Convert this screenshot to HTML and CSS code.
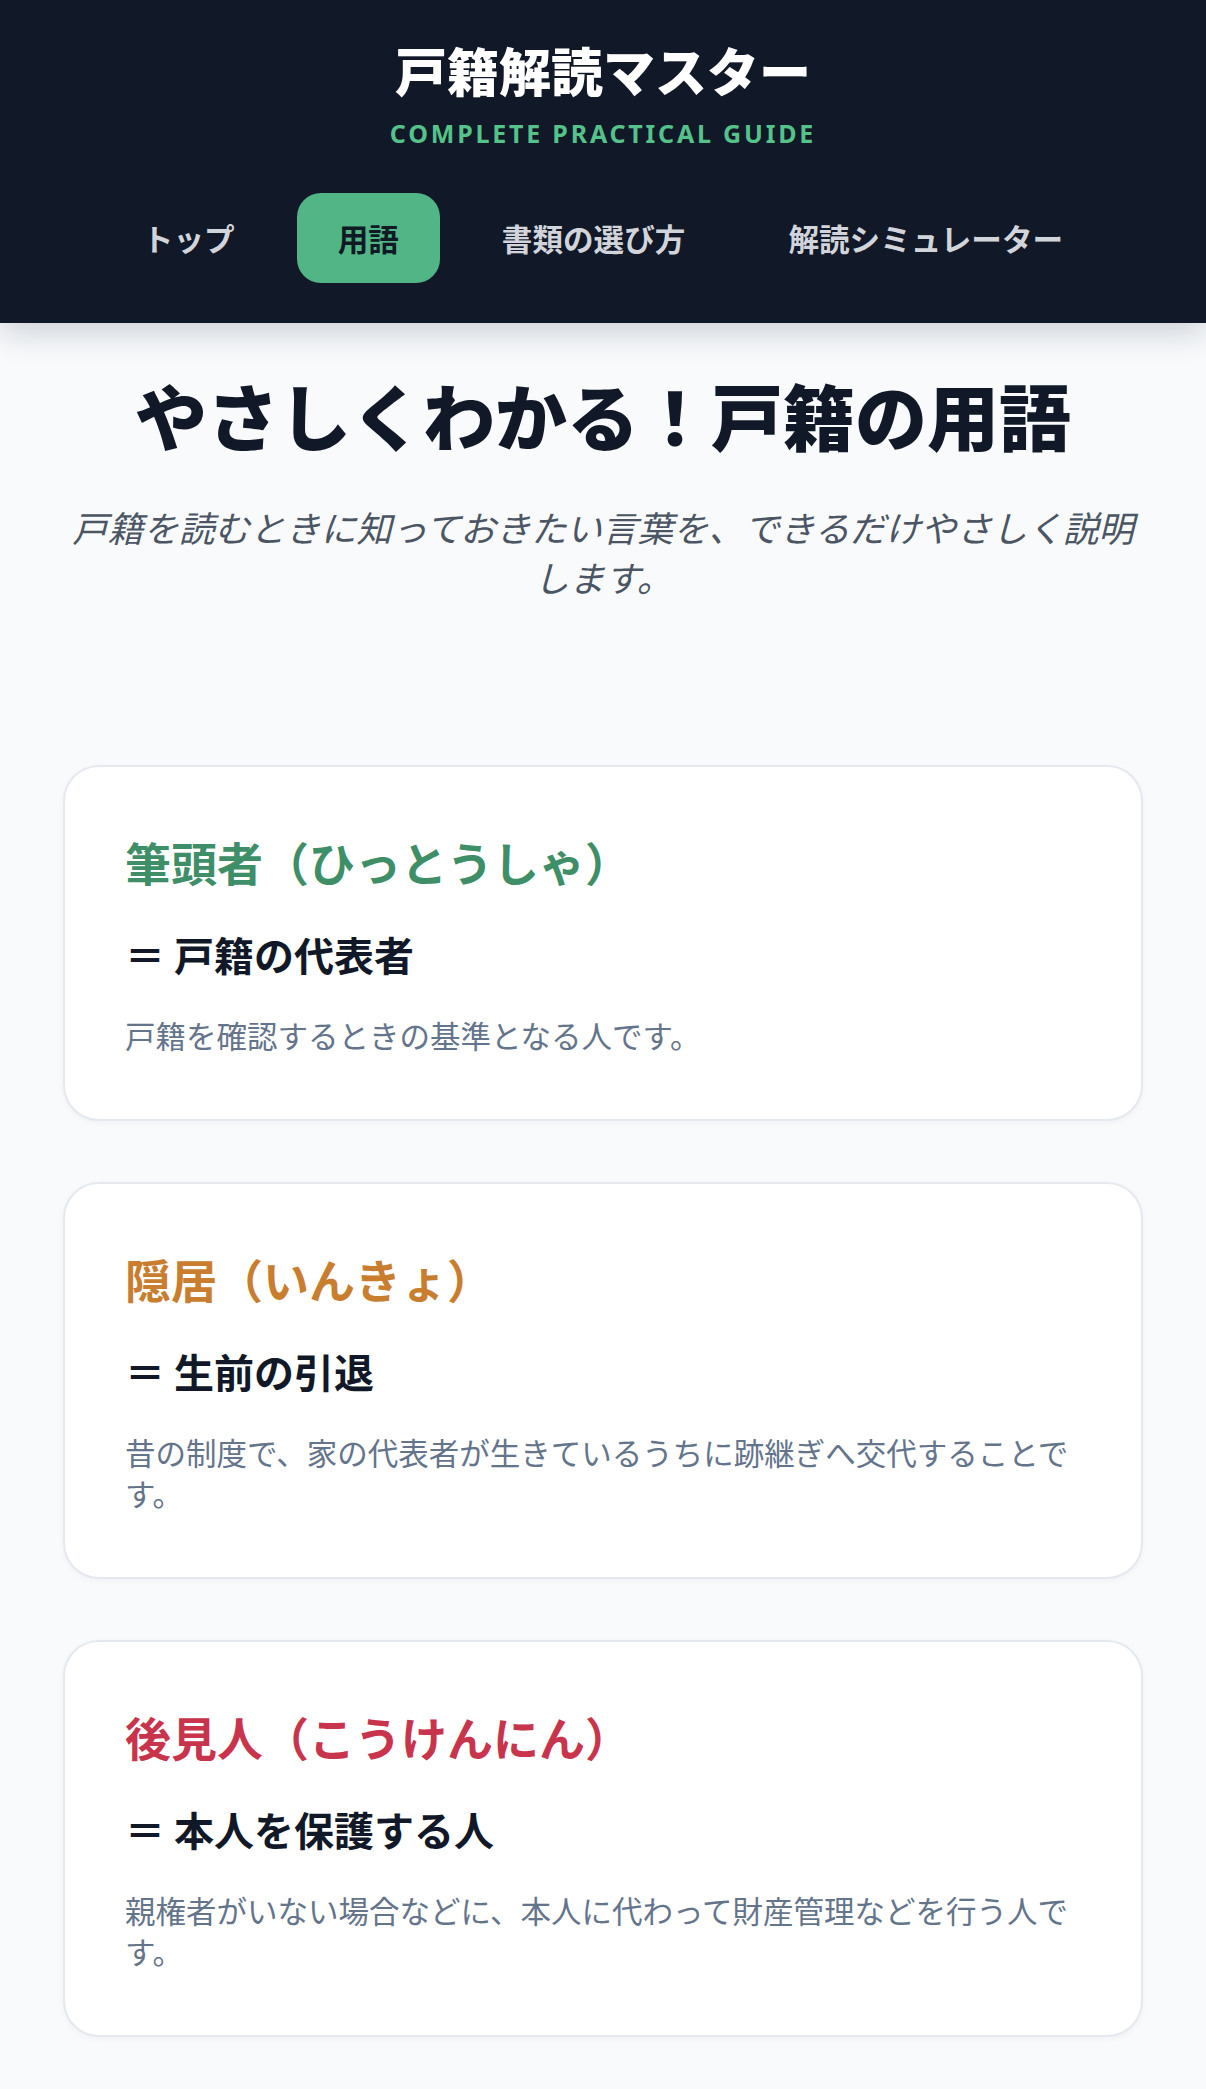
FILE: index.html
```html
<!DOCTYPE html>
<html lang="ja">
<head>
<meta charset="utf-8">
<title>戸籍解読マスター</title>
<link rel="stylesheet" href="styles.css">
</head>
<body>
<header class="site-header">
  <h1 class="brand">戸籍解読マスター</h1>
  <p class="brand-sub">COMPLETE PRACTICAL GUIDE</p>
  <nav class="nav">
    <a class="nav-item">トップ</a>
    <a class="nav-item is-active">用語</a>
    <a class="nav-item">書類の選び方</a>
    <a class="nav-item">解読シミュレーター</a>
  </nav>
</header>
<main class="main">
  <section class="intro">
    <h2 class="page-title">やさしくわかる！戸籍の用語</h2>
    <p class="page-lead">戸籍を読むときに知っておきたい言葉を、できるだけやさしく説明します。</p>
  </section>
  <section class="terms">
    <article class="term-card">
      <h3 class="term-name term-green">筆頭者（ひっとうしゃ）</h3>
      <p class="term-meaning">＝ 戸籍の代表者</p>
      <p class="term-desc">戸籍を確認するときの基準となる人です。</p>
    </article>
    <article class="term-card">
      <h3 class="term-name term-orange">隠居（いんきょ）</h3>
      <p class="term-meaning">＝ 生前の引退</p>
      <p class="term-desc">昔の制度で、家の代表者が生きているうちに跡継ぎへ交代することです。</p>
    </article>
    <article class="term-card">
      <h3 class="term-name term-red">後見人（こうけんにん）</h3>
      <p class="term-meaning">＝ 本人を保護する人</p>
      <p class="term-desc">親権者がいない場合などに、本人に代わって財産管理などを行う人です。</p>
    </article>
  </section>
</main>
</body>
</html>
```
FILE: styles.css
```css
* { box-sizing: border-box; }
html, body {
  margin: 0;
  padding: 0;
}
body {
  background: #f8fafc;
  font-family: "Noto Sans CJK JP", "Noto Sans", sans-serif;
  color: #111827;
}
.site-header {
  background: #111827;
  padding: 39px 0 40px;
  display: flex;
  flex-direction: column;
  align-items: center;
  box-shadow: 0 10px 30px rgba(15, 23, 42, 0.18);
  position: relative;
  z-index: 1;
}
.brand {
  margin: 0;
  font-size: 52px;
  line-height: 62px;
  font-weight: 900;
  color: #ffffff;
}
.brand-sub {
  margin: 13px 0 0;
  font-family: "Noto Sans", "Open Sans", sans-serif;
  font-size: 25px;
  line-height: 39px;
  font-weight: 700;
  letter-spacing: 2.8px;
  color: #55c28a;
}
.nav {
  margin-top: 40px;
  display: flex;
  gap: 21px;
  justify-content: center;
}
.nav-item {
  display: block;
  padding: 22px 41px;
  font-size: 30.6px;
  line-height: 46px;
  font-weight: 700;
  color: #d1d5db;
  border-radius: 24px;
  white-space: nowrap;
}
.nav-item.is-active {
  background: #52b586;
  color: #0f1a24;
}
.main {
  padding: 0 63px 52px;
}
.intro {
  padding-top: 50px;
  text-align: center;
}
.page-title {
  margin: 0;
  font-size: 72px;
  line-height: 82px;
  font-weight: 900;
  color: #111827;
}
.page-lead {
  margin: 47px 0 0;
  font-size: 35.5px;
  line-height: 50px;
  font-style: italic;
  color: #4b5563;
}
.terms {
  margin-top: 163px;
  display: flex;
  flex-direction: column;
  gap: 61px;
}
.term-card {
  background: #ffffff;
  border: 2px solid #e5e9ef;
  border-radius: 36px;
  padding: 55px 60px 63px;
  box-shadow: 0 2px 6px rgba(15, 23, 42, 0.04);
}
.term-name {
  margin: 0;
  font-size: 46px;
  line-height: 78px;
  font-weight: 700;
}
.term-green { color: #3e8e67; }
.term-orange { color: #c97d2e; }
.term-red { color: #c9344d; }
.term-meaning {
  margin: 26px 0 0;
  font-size: 40px;
  line-height: 56px;
  font-weight: 700;
  color: #111827;
}
.term-desc {
  margin: 33px 0 0;
  font-size: 30.5px;
  line-height: 41px;
  color: #64748b;
}
```
